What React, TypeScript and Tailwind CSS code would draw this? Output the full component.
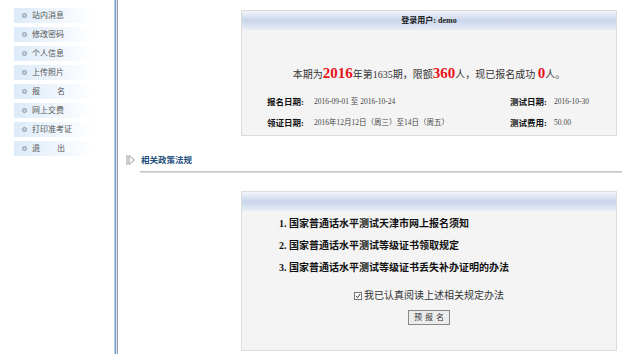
import React from "react";

const menu = ["站内消息", "修改密码", "个人信息", "上传照片", "报|名", "网上交费", "打印准考证", "退|出"];

function MenuItem({ label }: { label: string }) {
  const parts = label.split("|");
  return (
    <div className="ml-[14px] flex h-[15px] w-[80px] items-center bg-gradient-to-r from-[#dcebf8] via-[#eef5fc] to-white">
      <span className="ml-[8px] h-[5px] w-[5px] rounded-full border border-[#8a9bb0] bg-[#c9d3df]" />
      {parts.length > 1 ? (
        <span className="ml-[5px] flex w-[33px] justify-between text-[8px] leading-none text-[#555]">
          <span>{parts[0]}</span>
          <span>{parts[1]}</span>
        </span>
      ) : (
        <span className="ml-[5px] text-[8px] leading-none text-[#555]">{label}</span>
      )}
    </div>
  );
}

function CardHeader({ children }: { children?: React.ReactNode }) {
  return (
    <div className="flex h-[19px] items-center justify-center bg-gradient-to-b from-[#f3f5fa] via-[#c9d5ea] to-[#e9eef7] text-[8px] font-bold leading-none text-[#222]">
      {children}
    </div>
  );
}

export default function App() {
  return (
    <div className="flex h-[354px] w-[622px] overflow-hidden bg-white font-['Liberation_Serif','Noto_Sans_CJK_SC',serif] text-[#222]">
      {/* sidebar */}
      <div className="flex w-[114px] flex-col gap-[4px] pt-[8px] font-['Liberation_Sans','Noto_Sans_CJK_SC',sans-serif]">
        {menu.map((m) => (
          <MenuItem key={m} label={m} />
        ))}
      </div>

      {/* divider */}
      <div className="flex">
        <div className="w-px bg-[#b9cfe8]" />
        <div className="w-px bg-[#6f9bd0]" />
        <div className="w-px bg-[#dde8f5]" />
        <div className="w-px bg-[#9c9c9c]" />
      </div>

      {/* main */}
      <div className="flex flex-1 flex-col">
        <div className="ml-[123px] mt-[10px] h-[126px] w-[376px] border border-[#dcdcdc] bg-[#f4f4f4]">
          <CardHeader>登录用户: demo</CardHeader>
          <div className="pt-[33px] text-center text-[10px] leading-[20px] text-[#333]">
            本期为<b className="text-[15px] text-[#e8141b]">2016</b>年第1635期，限额
            <b className="text-[15px] text-[#e8141b]">360</b>人，现已报名成功{" "}
            <b className="text-[15px] text-[#e8141b]">0</b>人。
          </div>
          <div className="mt-[9px] grid grid-cols-[47px_196px_44px_1fr] gap-y-[5px] pl-[25px] text-[7.5px] leading-[16px] text-[#444]">
            <b className="text-[8.5px] text-[#111]">报名日期:</b>
            <span>2016-09-01 至 2016-10-24</span>
            <b className="text-[8.5px] text-[#111]">测试日期:</b>
            <span>2016-10-30</span>
            <b className="text-[8.5px] text-[#111]">领证日期:</b>
            <span>2016年12月12日（周三）至14日（周五）</span>
            <b className="text-[8.5px] text-[#111]">测试费用:</b>
            <span>50.00</span>
          </div>
        </div>

        <div className="ml-[8px] mt-[17px] flex items-center">
          <svg width="10" height="12" viewBox="0 0 10 12" className="mr-[5px]">
            <line x1="1" y1="1" x2="1" y2="11" stroke="#999" strokeWidth="1" />
            <path d="M3 1.5 L8.5 6 L3 10.5 Z" fill="none" stroke="#999" strokeWidth="1" />
          </svg>
          <span className="text-[8.5px] font-bold leading-[14px] text-[#1d4f7c]">相关政策法规</span>
        </div>
        <div className="ml-[22px] mt-[4px] h-[2px] bg-gradient-to-b from-[#bcbcbc] to-[#e6e6e6]" />

        <div className="ml-[123px] mt-[18px] h-[160px] w-[376px] border border-[#dcdcdc] bg-[#f4f4f4]">
          <CardHeader />
          <div className="pl-[37px] pt-[2px] text-[10px] font-bold leading-[22px] text-[#111]">
            <div>1. 国家普通话水平测试天津市网上报名须知</div>
            <div>2. 国家普通话水平测试等级证书领取规定</div>
            <div>3. 国家普通话水平测试等级证书丢失补办证明的办法</div>
          </div>
          <div className="mt-[9px] flex items-center justify-center font-['Liberation_Sans','Noto_Sans_CJK_SC',sans-serif] text-[10px] leading-[16px] text-[#333]">
            <span className="mr-[2px] flex h-[8px] w-[8px] items-center justify-center border border-[#777] bg-white">
              <svg width="6" height="6" viewBox="0 0 6 6">
                <path d="M0.8 3 L2.5 4.7 L5.2 1" fill="none" stroke="#333" strokeWidth="1" />
              </svg>
            </span>
            我已认真阅读上述相关规定办法
          </div>
          <div className="mt-[6px] flex justify-center">
            <button className="h-[15px] w-[42px] border border-[#888] bg-[#ececec] pl-[3px] font-['Liberation_Sans','Noto_Sans_CJK_SC',sans-serif] text-[8px] leading-none tracking-[3px] text-[#333]">
              预报名
            </button>
          </div>
        </div>
      </div>
    </div>
  );
}
